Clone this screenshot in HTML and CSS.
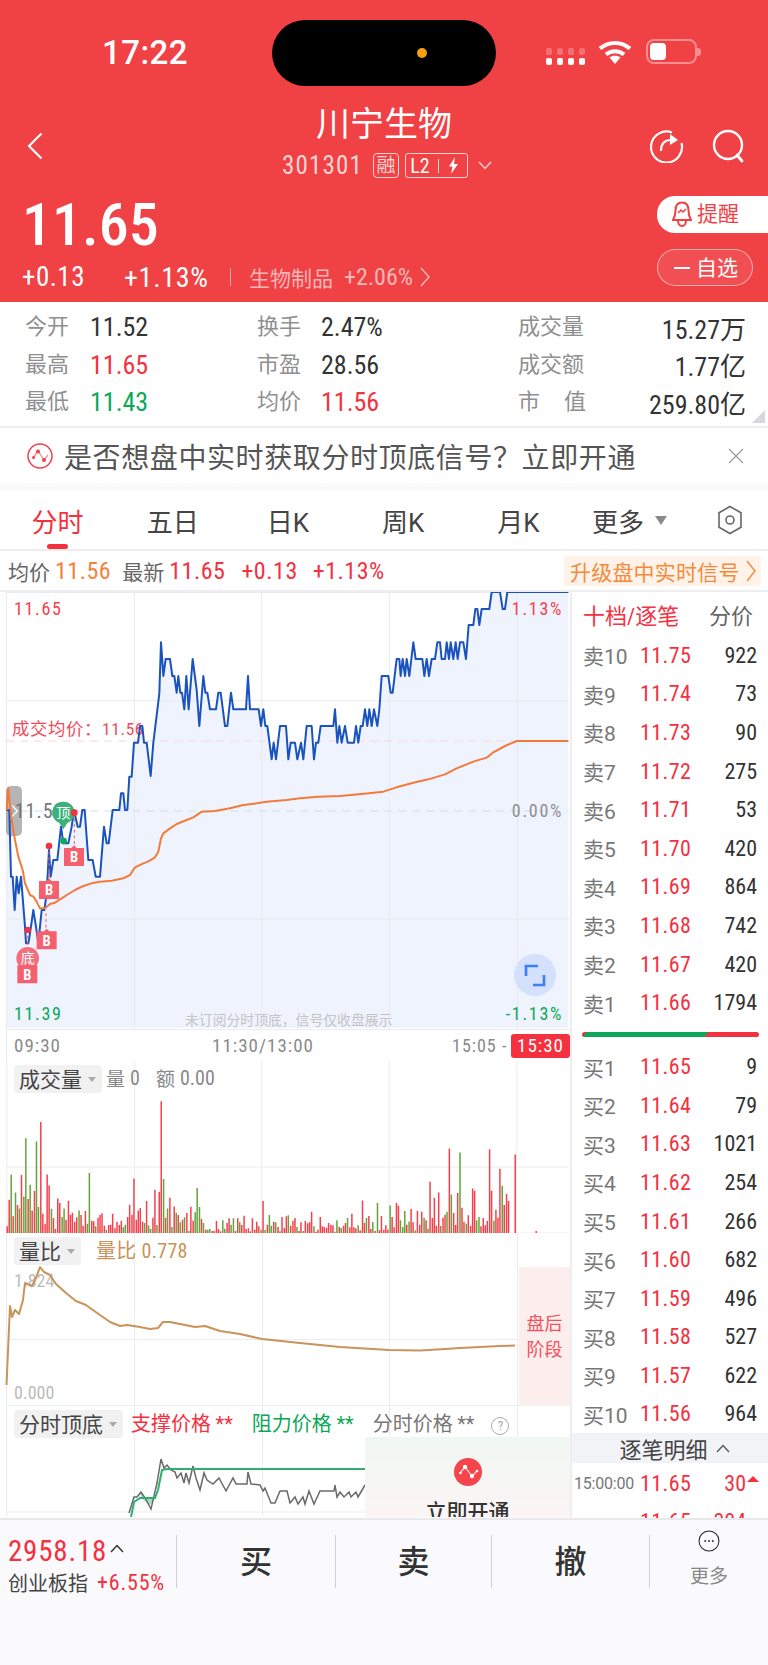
FILE: index.html
```html
<!DOCTYPE html>
<html lang="zh-CN">
<head>
<meta charset="utf-8">
<title>川宁生物 301301</title>
<link rel="stylesheet" href="styles.css">
</head>
<body>
<div class="screen">
  <header class="header">
    <div class="status">
      <div class="clock">17:22</div>
      <div class="island"><i class="island-dot"></i></div>
      <div class="status-icons">
        <svg class="sig" viewBox="0 0 39 17"><g fill="#fff" opacity=".25"><rect width="6" height="7" rx="2"/><rect x="11" width="6" height="7" rx="2"/><rect x="22" width="6" height="7" rx="2"/><rect x="33" width="6" height="7" rx="2"/></g><g fill="#fff"><rect y="10" width="6" height="7" rx="2"/><rect x="11" y="10" width="6" height="7" rx="2"/><rect x="22" y="10" width="6" height="7" rx="2"/><rect x="33" y="10" width="6" height="7" rx="2"/></g></svg>
        <svg class="wifi" viewBox="0 0 34 25"><g fill="none" stroke="#fff" stroke-width="4"><path d="M2 9.5C10.500 2 23.500 2 32 9.500"/><path d="M8 15.500C13 11 21 11 26 15.500"/></g><path d="M17 25l-5.500-6.500c3-2.500 8-2.500 11 0z" fill="#fff"/></svg>
        <div class="battery"><i class="battery-level"></i></div>
      </div>
    </div>
    <div class="nav">
      <div class="nav-side">
        <svg class="back" viewBox="0 0 16 28"><path d="M14.500 1.500L2 14l12.500 12.500" fill="none" stroke="#fff" stroke-width="2.200"/></svg>
      </div>
      <div class="nav-title">
        <h1 class="name">川宁生物</h1>
        <div class="code-row">
          <span class="code">301301</span>
          <span class="tag-rong">融</span>
          <span class="tag-l2">L2<i class="tag-rule"></i><svg class="bolt" viewBox="0 0 11 17"><path d="M7 0L1 9.500h3.500L3 17l7-10H6z" fill="#fff"/></svg></span>
          <svg class="drop" viewBox="0 0 14 9"><path d="M1 1l6 6.500L13 1" fill="none" stroke="#fbd0d0" stroke-width="1.500"/></svg>
        </div>
      </div>
      <div class="nav-side nav-actions">
        <svg class="act" viewBox="0 0 34 34"><path d="M22 3.500A15.500 15.500 0 1 0 31.500 14" fill="none" stroke="#fff" stroke-width="2.200"/><path d="M11 22c0-7 3-11 10-11" fill="none" stroke="#fff" stroke-width="2.200"/><path d="M20 5l8 6-8 5z" fill="#fff"/></svg>
        <svg class="act" viewBox="0 0 34 34"><circle cx="16" cy="16" r="14" fill="none" stroke="#fff" stroke-width="2.400"/><path d="M25 26l5 6" stroke="#fff" stroke-width="2.800" stroke-linecap="round"/></svg>
      </div>
    </div>
    <div class="quote">
      <div>
        <div class="price">11.65</div>
        <div class="quote-line">
          <span class="chg">+0.13</span>
          <span class="pct">+1.13%</span>
          <i class="quote-rule"></i>
          <span class="sector">生物制品</span>
          <span class="sector-chg">+2.06%</span>
          <svg class="sector-go" viewBox="0 0 10 20"><path d="M1 1l8 9-8 9" fill="none" stroke="#f9bcbc" stroke-width="1.400"/></svg>
        </div>
      </div>
      <div class="quote-btns">
        <div class="btn-remind">
          <svg class="bell" viewBox="0 0 20 27"><path d="M10 1.500c-4.500 0-6.500 3.500-6.500 8 0 5-1 7-2.500 9.500h18c-1.500-2.500-2.500-4.500-2.500-9.500 0-4.500-2-8-6.500-8zM6 19.500c0 3 1.500 5.500 4 5.500s4-2.500 4-5.500" fill="none" stroke="#f04145" stroke-width="2"/><path d="M6 12l3-3 2 2 3-3" fill="none" stroke="#f04145" stroke-width="1.500"/></svg>
          提醒
        </div>
        <div class="btn-watch"><i class="watch-dash"></i>自选</div>
      </div>
    </div>
  </header>

  <section class="stats">
    <span class="lab">今开</span><span class="val">11.52</span>
    <span class="lab">换手</span><span class="val">2.47%</span>
    <span class="lab">成交量</span><span class="val val-end">15.27万</span>
    <span class="lab">最高</span><span class="val up">11.65</span>
    <span class="lab">市盈</span><span class="val">28.56</span>
    <span class="lab">成交额</span><span class="val val-end">1.77亿</span>
    <span class="lab">最低</span><span class="val down">11.43</span>
    <span class="lab">均价</span><span class="val up">11.56</span>
    <span class="lab lab-spread">市 值</span><span class="val val-end">259.80亿</span>
    <i class="stats-corner"></i>
  </section>

  <section class="notice">
    <svg class="notice-icon" viewBox="0 0 26 26"><circle cx="13" cy="13" r="12" fill="#fff" stroke="#f0404c" stroke-width="1.500"/><path d="M6 15l5-7 6 9 4-5" fill="none" stroke="#e8929a" stroke-width="1.300"/><g fill="#f0404c"><circle cx="11" cy="8.500" r="2"/><circle cx="17" cy="17" r="2"/><circle cx="6.500" cy="14.500" r="1.500"/></g></svg>
    <span class="notice-text">是否想盘中实时获取分时顶底信号？立即开通</span>
    <svg class="notice-close" viewBox="0 0 16 16"><path d="M1 1l14 14M15 1L1 15" stroke="#9a9a9a" stroke-width="1.300"/></svg>
  </section>

  <nav class="tabs">
    <span class="tab tab-on">分时</span>
    <span class="tab">五日</span>
    <span class="tab">日K</span>
    <span class="tab">周K</span>
    <span class="tab">月K</span>
    <span class="tab tab-more">更多<i class="caret"></i></span>
    <span class="tab"><svg class="hex" viewBox="0 0 26 30"><path d="M13 1.500l11 6.300v14.400l-11 6.300-11-6.300V7.800z" fill="none" stroke="#666" stroke-width="1.600"/><circle cx="13" cy="15" r="4" fill="none" stroke="#666" stroke-width="1.600"/></svg></span>
  </nav>

  <div class="ticker">
    <span class="tk-lab">均价</span><span class="tk-avg">11.56</span>
    <span class="tk-lab tk-second">最新</span><span class="tk-up">11.65</span>
    <span class="tk-up tk-chg">+0.13</span>
    <span class="tk-up tk-pct">+1.13%</span>
    <span class="upgrade">升级盘中实时信号<svg class="upgrade-go" viewBox="0 0 10 22"><path d="M1 1l8 10-8 10" fill="none" stroke="#f58a3c" stroke-width="1.400"/></svg></span>
  </div>

  <div class="market">
    <div class="charts">
      <!-- intraday price chart, drawn in thirds of a pixel -->
      <svg class="chart-main" viewBox="0 0 1713 1311">
        <path class="area" d="M20 654L28 654 33 854 38 854 44 954 50 854 56 904 63 854 75 1004 78 1054 85 1054 90 1024 100 954 108 1004 115 1054 125 954 133 954 140 904 147 774 152 854 160 804 172 804 183 704 190 754 205 754 215 704 222 654 233 704 240 704 247 654 254 654 265 804 278 804 287 854 300 854 312 704 320 754 326 754 338 654 358 654 363 604 370 604 375 654 382 654 388 554 395 554 402 452 414 452 420 402 427 402 432 452 440 452 452 552 460 452 478 304 483 151 490 252 497 201 510 201 517 252 523 252 530 302 535 252 541 302 546 302 553 352 559 252 566 352 578 201 590 294 598 402 610 252 616 302 622 302 630 352 648 352 655 302 662 302 675 402 682 402 693 302 700 352 738 352 744 252 750 352 776 352 783 402 790 352 796 402 802 402 815 502 821 452 828 502 840 402 858 402 865 502 872 452 885 452 892 502 903 452 910 502 920 402 935 402 942 502 948 452 955 452 962 402 1000 402 1005 352 1012 452 1018 402 1025 452 1035 402 1043 452 1062 452 1068 402 1075 452 1082 402 1088 402 1095 352 1102 402 1108 352 1115 402 1122 352 1132 402 1138 352 1145 252 1165 252 1172 302 1178 302 1190 201 1198 201 1202 252 1208 201 1215 252 1220 201 1228 252 1240 151 1247 201 1267 201 1273 252 1280 201 1287 252 1295 201 1305 201 1312 151 1320 151 1325 201 1335 201 1340 151 1347 201 1352 151 1360 201 1367 151 1373 201 1380 151 1390 151 1398 201 1406 99 1420 99 1426 51 1432 51 1438 99 1445 51 1468 51 1475 0 1500 0 1508 51 1515 51 1522 0 1705 0V1308H20Z"/>
        <g class="grid">
          <path d="M19 0V1311M403 0V1311M785 0V1311M1168 0V1311M1552 0V1311M19 1.500H1707M19 326H1707M19 981H1707"/>
        </g>
        <path class="dash-avg" d="M19 447H1707"/>
        <path class="dash-mid" d="M19 657H1707"/>
        <rect class="handle" x="18" y="582" width="48" height="150" rx="15"/>
        <path class="handle-go" d="M36 640l16 17-16 17"/>
        <text class="lb up" x="42" y="69">11.65</text>
        <text class="lb up" x="1689" y="69" text-anchor="end">1.13%</text>
        <text class="lb-avg" x="36" y="429">成交均价：11.56</text>
        <text class="lb-mid" x="44" y="678">11.52</text>
        <text class="lb gray" x="1689" y="675" text-anchor="end">0.00%</text>
        <text class="lb down" x="42" y="1284">11.39</text>
        <text class="lb down" x="1689" y="1284" text-anchor="end">-1.13%</text>
        <text class="lb-hint" x="555" y="1299">未订阅分时顶底，信号仅收盘展示</text>
        <polyline class="line-price" points="20,654 28,654 33,854 38,854 44,954 50,854 56,904 63,854 75,1004 78,1054 85,1054 90,1024 100,954 108,1004 115,1054 125,954 133,954 140,904 147,774 152,854 160,804 172,804 183,704 190,754 205,754 215,704 222,654 233,704 240,704 247,654 254,654 265,804 278,804 287,854 300,854 312,704 320,754 326,754 338,654 358,654 363,604 370,604 375,654 382,654 388,554 395,554 402,452 414,452 420,402 427,402 432,452 440,452 452,552 460,452 478,304 483,151 490,252 497,201 510,201 517,252 523,252 530,302 535,252 541,302 546,302 553,352 559,252 566,352 578,201 590,294 598,402 610,252 616,302 622,302 630,352 648,352 655,302 662,302 675,402 682,402 693,302 700,352 738,352 744,252 750,352 776,352 783,402 790,352 796,402 802,402 815,502 821,452 828,502 840,402 858,402 865,502 872,452 885,452 892,502 903,452 910,502 920,402 935,402 942,502 948,452 955,452 962,402 1000,402 1005,352 1012,452 1018,402 1025,452 1035,402 1043,452 1062,452 1068,402 1075,452 1082,402 1088,402 1095,352 1102,402 1108,352 1115,402 1122,352 1132,402 1138,352 1145,252 1165,252 1172,302 1178,302 1190,201 1198,201 1202,252 1208,201 1215,252 1220,201 1228,252 1240,151 1247,201 1267,201 1273,252 1280,201 1287,252 1295,201 1305,201 1312,151 1320,151 1325,201 1335,201 1340,151 1347,201 1352,151 1360,201 1367,151 1373,201 1380,151 1390,151 1398,201 1406,99 1420,99 1426,51 1432,51 1438,99 1445,51 1468,51 1475,0 1500,0 1508,51 1515,51 1522,0 1705,0"/>
        <polyline class="line-avg" points="20,654 25,589 35,684 45,744 55,794 68,834 75,874 90,909 100,914 110,929 120,949 135,949 150,936 165,932 185,919 205,906 225,894 250,882 275,874 300,869 335,866 370,859 390,849 405,826 430,814 445,808 465,796 475,779 483,739 490,724 510,709 530,696 560,684 580,676 605,659 645,657 690,649 730,639 770,634 800,629 860,624 900,619 955,614 1020,612 1085,606 1150,599 1190,586 1240,572 1285,562 1335,547 1370,529 1420,509 1460,497 1480,481 1515,462 1550,447 1705,447"/>
        <!-- buy and top/bottom signals -->
        <path class="sig-dash" d="M83 1014V1100M147 762V860M138 964V1010M223 662V760"/>
        <circle class="sig-bottom" cx="83" cy="1099" r="34"/>
        <text class="sig-char" x="83" y="1112" text-anchor="middle">底</text>
        <path class="sig-top" d="M190 629a33 33 0 0 1 12 64l-12 19-12-19a33 33 0 0 1 12-64z"/>
        <text class="sig-char" x="190" y="678" text-anchor="middle">顶</text>
        <path class="sig-tag" d="M52 1120H74L82 1112 90 1120H112V1174H52Z"/>
        <text class="sig-b" x="82" y="1163" text-anchor="middle">B</text>
        <path class="sig-tag" d="M110 1018H132L140 1010 148 1018H170V1072H110Z"/>
        <text class="sig-b" x="140" y="1061" text-anchor="middle">B</text>
        <path class="sig-tag" d="M117 867H139L147 859 155 867H177V921H117Z"/>
        <text class="sig-b" x="147" y="910" text-anchor="middle">B</text>
        <path class="sig-tag" d="M192 768H214L222 760 230 768H252V822H192Z"/>
        <text class="sig-b" x="222" y="811" text-anchor="middle">B</text>
        <circle class="dot-up" cx="83" cy="1014" r="10"/>
        <circle class="dot-up" cx="147" cy="762" r="10"/>
        <circle class="dot-up" cx="223" cy="662" r="10"/>
        <circle class="dot-down" cx="191" cy="747" r="10"/>
        <circle class="expand" cx="1605" cy="1149" r="63"/>
        <path class="expand-mark" d="M1578 1152V1122H1614M1632 1149V1179H1599"/>
      </svg>

      <div class="axis">
        <span class="axis-a">09:30</span>
        <span class="axis-b">11:30/13:00</span>
        <span class="axis-c">15:05 -</span>
        <span class="axis-now">15:30</span>
      </div>

      <div class="pane pane-vol">
        <svg class="pane-svg" viewBox="0 3 1713 517">
          <path class="grid-line" d="M19 0V520M403 0V520M785 0V520M1168 0V520M1552 0V520M19 322H1707M19 520H1707"/>
          <path class="bars-up" d="M20 500V520M26 420V520M38 470V520M51 436V520M63 346V520M83 418V520M95 452V520M102 394V520M121 186V520M127 462V520M134 492V520M140 344V520M146 377V520M159 475V520M165 508V520M172 416V520M178 430V520M197 480V520M204 423V520M210 465V520M216 459V520M223 486V520M229 473V520M242 466V520M248 498V520M255 454V520M274 483V520M280 485V520M293 474V520M299 466V520M305 461V520M312 498V520M325 496V520M331 495V520M337 462V520M344 506V520M350 486V520M357 496V520M363 483V520M382 472V520M388 435V520M395 465V520M401 356V520M408 480V520M414 452V520M420 445V520M427 486V520M439 424V520M458 474V520M464 390V520M477 397V520M483 124V520M496 474V520M509 414V520M522 440V520M534 466V520M547 480V520M560 460V520M572 441V520M579 483V520M604 477V520M617 510V520M636 514V520M642 514V520M649 484V520M655 508V520M661 515V520M681 490V520M687 476V520M706 514V520M713 476V520M725 496V520M732 468V520M738 508V520M745 506V520M757 476V520M764 510V520M770 486V520M776 500V520M789 424V520M802 495V520M821 486V520M834 502V520M846 472V520M853 505V520M859 470V520M872 498V520M879 483V520M885 475V520M897 514V520M903 488V520M916 484V520M923 491V520M929 488V520M935 456V520M948 516V520M954 510V520M961 472V520M967 500V520M973 502V520M980 504V520M986 490V520M993 495V520M999 497V520M1018 502V520M1031 498V520M1037 490V520M1050 503V520M1056 462V520M1062 503V520M1068 506V520M1081 512V520M1088 422V520M1094 490V520M1107 469V520M1113 508V520M1126 514V520M1139 512V520M1145 469V520M1152 510V520M1158 497V520M1164 510V520M1177 472V520M1183 503V520M1190 430V520M1196 438V520M1221 495V520M1234 448V520M1240 488V520M1253 453V520M1260 495V520M1266 456V520M1279 482V520M1291 366V520M1298 475V520M1304 414V520M1310 498V520M1317 398V520M1330 474V520M1336 465V520M1349 266V520M1362 460V520M1368 496V520M1374 400V520M1387 444V520M1393 486V520M1406 467V520M1413 498V520M1419 386V520M1425 393V520M1444 500V520M1451 475V520M1457 497V520M1463 484V520M1470 268V520M1476 393V520M1489 450V520M1495 474V520M1501 327V520M1514 436V520M1521 403V520M1527 424V520M1547 284V520M1610 514V520"/>
          <path class="bars-down" d="M32 345V520M45 398V520M57 446V520M70 410V520M76 235V520M89 375V520M108 245V520M114 442V520M153 447V520M185 472V520M191 446V520M236 452V520M261 492V520M267 340V520M286 500V520M318 510V520M369 503V520M375 495V520M433 490V520M445 497V520M451 508V520M470 496V520M490 358V520M502 446V520M515 502V520M528 459V520M540 488V520M553 473V520M566 514V520M585 458V520M591 385V520M598 442V520M610 490V520M623 510V520M629 508V520M668 482V520M674 507V520M693 495V520M700 476V520M719 488V520M751 515V520M783 510V520M795 510V520M808 466V520M814 498V520M827 488V520M840 515V520M865 467V520M891 502V520M910 514V520M942 500V520M1005 516V520M1011 482V520M1024 505V520M1043 475V520M1075 497V520M1100 475V520M1119 487V520M1133 430V520M1171 437V520M1202 482V520M1209 502V520M1215 454V520M1228 486V520M1247 512V520M1273 474V520M1285 507V520M1323 498V520M1342 456V520M1355 404V520M1381 278V520M1400 492V520M1431 482V520M1438 472V520M1483 483V520M1508 378V520"/>
        </svg>
        <div class="pane-tools">
          <span class="chip">成交量<i class="chip-caret"></i></span>
          <span class="vol-lab">量</span><span class="vol-num">0</span>
          <span class="vol-lab vol-gap">额</span><span class="vol-num">0.00</span>
        </div>
      </div>

      <div class="pane pane-ratio">
        <svg class="pane-svg" viewBox="0 1233 571 173">
          <path class="grid-thin" d="M6.500 1233V1406M134.500 1233V1406M262.500 1233V1406M389.500 1233V1406M517.500 1233V1406M6 1339.500H570M6 1405.500H570"/>
          <text class="lb-small" x="14" y="1287">1.824</text>
          <text class="lb-small" x="14" y="1399">0.000</text>
          <polyline class="line-ratio" points="6.500,1385 10,1306 12,1317 15,1310 19,1314 23,1300 25,1283 32,1286 36,1278 40,1267 44,1272 50,1275 56,1284 66,1293 76,1301 86,1305 90,1308 100,1315 110,1322 120,1326 127,1325 140,1327 150,1329 158,1328 163,1322 170,1322 180,1324 195,1327 205,1326 220,1331 240,1334 262,1339 300,1343 340,1347 389,1350 420,1350.500 445,1349 460,1348 480,1347 500,1346 515,1345.500"/>
        </svg>
        <div class="pane-tools">
          <span class="chip">量比<i class="chip-caret"></i></span>
          <span class="ratio-val">量比 0.778</span>
        </div>
        <div class="after-hours">盘后<br>阶段</div>
      </div>

      <div class="pane pane-signal">
        <svg class="pane-svg" viewBox="0 1406 571 111">
          <path class="grid-thin" d="M6.500 1406V1517M134.500 1406V1517M262.500 1406V1517M389.500 1406V1517M517.500 1406V1517M6 1512H570"/>
          <path class="band" d="M140 1492L145 1498 155 1498 150 1505 141 1498Z"/>
          <polyline class="line-gray" points="129,1513 134,1497 137,1497 141,1492 145,1498 151,1509 157,1483 161,1459 164,1468 167,1465 171,1470 175,1472 177,1478 181,1473 184,1483 186,1473 189,1483 193,1466 196,1478 200,1490 204,1473 207,1480 213,1484 219,1478 226,1491 233,1478 236,1484 247,1484 248,1472 251,1484 260,1485 263,1491 265,1488 271,1503 275,1503 280,1491 287,1491 290,1503 295,1497 298,1504 303,1497 305,1504 309,1491 314,1504 320,1491 334,1491 335,1485 337,1497 340,1492 344,1497 349,1492 351,1497 356,1492 358,1497 365,1485"/>
          <polyline class="line-green" points="131,1517 134,1502 140,1498 155,1498 158,1490 162,1470 167,1469 365,1469"/>
        </svg>
        <div class="pane-tools signal-tools">
          <span class="chip">分时顶底<i class="chip-caret"></i></span>
          <span class="sg sg-up">支撑价格 **</span>
          <span class="sg sg-down">阻力价格 **</span>
          <span class="sg sg-gray">分时价格 **</span>
          <span class="sg-help">?</span>
        </div>
        <div class="unlock">
          <svg class="unlock-icon" viewBox="0 0 28 28"><circle cx="14" cy="14" r="14" fill="#f4454c"/><path d="M6 15l5-6 7 9 5-5" fill="none" stroke="#fff" stroke-width="1.200" opacity=".8"/><g fill="#fff"><circle cx="11" cy="9" r="2.200"/><circle cx="18" cy="18" r="2.200"/><circle cx="6.500" cy="15" r="1.300"/><circle cx="23" cy="13" r="1.300"/></g></svg>
          <span class="unlock-text">立即开通</span>
        </div>
      </div>
    </div>

    <aside class="book">
      <div class="book-head"><span class="book-title">十档/逐笔</span><span class="book-alt">分价</span></div>
      <div class="row"><span class="r-lab">卖10</span><span class="r-price">11.75</span><span class="r-qty">922</span></div>
      <div class="row"><span class="r-lab">卖9</span><span class="r-price">11.74</span><span class="r-qty">73</span></div>
      <div class="row"><span class="r-lab">卖8</span><span class="r-price">11.73</span><span class="r-qty">90</span></div>
      <div class="row"><span class="r-lab">卖7</span><span class="r-price">11.72</span><span class="r-qty">275</span></div>
      <div class="row"><span class="r-lab">卖6</span><span class="r-price">11.71</span><span class="r-qty">53</span></div>
      <div class="row"><span class="r-lab">卖5</span><span class="r-price">11.70</span><span class="r-qty">420</span></div>
      <div class="row"><span class="r-lab">卖4</span><span class="r-price">11.69</span><span class="r-qty">864</span></div>
      <div class="row"><span class="r-lab">卖3</span><span class="r-price">11.68</span><span class="r-qty">742</span></div>
      <div class="row"><span class="r-lab">卖2</span><span class="r-price">11.67</span><span class="r-qty">420</span></div>
      <div class="row"><span class="r-lab">卖1</span><span class="r-price">11.66</span><span class="r-qty">1794</span></div>
      <div class="balance"><div class="balance-bar"><i class="balance-buy"></i></div></div>
      <div class="row"><span class="r-lab">买1</span><span class="r-price">11.65</span><span class="r-qty">9</span></div>
      <div class="row"><span class="r-lab">买2</span><span class="r-price">11.64</span><span class="r-qty">79</span></div>
      <div class="row"><span class="r-lab">买3</span><span class="r-price">11.63</span><span class="r-qty">1021</span></div>
      <div class="row"><span class="r-lab">买4</span><span class="r-price">11.62</span><span class="r-qty">254</span></div>
      <div class="row"><span class="r-lab">买5</span><span class="r-price">11.61</span><span class="r-qty">266</span></div>
      <div class="row"><span class="r-lab">买6</span><span class="r-price">11.60</span><span class="r-qty">682</span></div>
      <div class="row"><span class="r-lab">买7</span><span class="r-price">11.59</span><span class="r-qty">496</span></div>
      <div class="row"><span class="r-lab">买8</span><span class="r-price">11.58</span><span class="r-qty">527</span></div>
      <div class="row"><span class="r-lab">买9</span><span class="r-price">11.57</span><span class="r-qty">622</span></div>
      <div class="row"><span class="r-lab">买10</span><span class="r-price">11.56</span><span class="r-qty">964</span></div>
      <div class="ticks-head">逐笔明细<svg class="ticks-fold" viewBox="0 0 14 9"><path d="M1 8l6-6.500L13 8" fill="none" stroke="#555" stroke-width="1.300"/></svg></div>
      <div class="tick"><span class="t-time">15:00:00</span><span class="r-price">11.65</span><span class="t-qty">30<i class="t-arrow"></i></span></div>
      <div class="tick"><span class="t-time"></span><span class="r-price">11.65</span><span class="t-qty">304<i class="t-arrow t-arrow-off"></i></span></div>
    </aside>
  </div>

  <footer class="dock">
    <div class="dock-index">
      <div class="idx-top"><span class="idx-val">2958.18</span><svg class="idx-go" viewBox="0 0 14 9"><path d="M1 8l6-6.500L13 8" fill="none" stroke="#333" stroke-width="1.500"/></svg></div>
      <div class="idx-bottom"><span class="idx-name">创业板指</span><span class="idx-chg">+6.55%</span></div>
    </div>
    <div class="dock-btn">买</div>
    <div class="dock-btn">卖</div>
    <div class="dock-btn">撤</div>
    <div class="dock-more">
      <svg class="more-icon" viewBox="0 0 32 32"><circle cx="16" cy="16" r="14.500" fill="none" stroke="#222" stroke-width="1.500"/><g fill="#222"><circle cx="10.500" cy="16" r="1.300"/><circle cx="16" cy="16" r="1.300"/><circle cx="21.500" cy="16" r="1.300"/></g></svg>
      <span class="more-text">更多</span>
    </div>
  </footer>
</div>
</body>
</html>
```
FILE: styles.css
```css
* { box-sizing: border-box; }
html, body { margin: 0; padding: 0; }
body {
  width: 768px;
  height: 1665px;
  overflow: hidden;
  background: #fafafc;
  color: #333;
  font-family: Roboto, "Noto Sans CJK SC", sans-serif;
  font-stretch: 85%;
}
i { display: block; font-style: normal; }
svg { display: block; }
.screen { width: 768px; height: 1665px; display: flex; flex-direction: column; }

/* red quote header */
.header { height: 302px; background: #f04145; color: #fff; flex: none; }
.status { display: grid; grid-template-columns: 272px 224px 272px; padding-top: 20px; }
.clock { font-size: 33px; font-weight: 500; font-stretch: 100%; text-align: center; line-height: 66px; margin-left: 18px; letter-spacing: .5px; }
.island { height: 66px; border-radius: 33px; background: #000; display: flex; align-items: center; justify-content: flex-end; padding-right: 69px; }
.island-dot { width: 10px; height: 10px; border-radius: 50%; background: #f5a00f; }
.status-icons { display: flex; align-items: flex-start; padding: 19px 0 0 50px; }
.sig { width: 39px; height: 17px; margin-top: 9px; }
.wifi { width: 34px; height: 25px; margin-left: 13px; }
.battery { width: 51px; height: 25px; margin-left: 14px; border: 2px solid rgba(255,255,255,.4); border-radius: 8px; padding: 2px; position: relative; }
.battery::after { content: ""; position: absolute; right: -6px; top: 7px; width: 4px; height: 8px; background: rgba(255,255,255,.4); border-radius: 0 3px 3px 0; }
.battery-level { width: 16px; height: 17px; background: #fff; border-radius: 4px; }

.nav { display: flex; align-items: center; padding-top: 19px; }
.nav-side { width: 120px; flex: none; display: flex; padding-left: 27px; margin-top: 8px; }
.nav-actions { justify-content: flex-end; padding: 0 22px 0 0; gap: 28px; }
.back { width: 16px; height: 28px; }
.act { width: 34px; height: 34px; }
.nav-title { flex: 1; display: flex; flex-direction: column; align-items: center; }
.name { margin: 0; font-size: 34px; font-weight: 400; line-height: 38px; }
.code-row { display: flex; align-items: center; gap: 10px; margin: 10px 0 0 6px; height: 25px; color: #fbd5d5; }
.code { font-size: 25px; letter-spacing: 1.200px; }
.tag-rong { width: 26px; height: 25px; border: 1px solid #fbd5d5; border-radius: 4px; font-size: 19px; line-height: 23px; text-align: center; }
.tag-l2 { width: 63px; height: 25px; margin-left: -4px; border: 1px solid #fbd5d5; border-radius: 3px; font-size: 20px; display: flex; align-items: center; padding-left: 4px; color: #fff; }
.tag-rule { width: 1px; height: 14px; background: #fbd5d5; margin: 0 9px 0 8px; }
.bolt { width: 11px; height: 17px; }
.drop { width: 14px; height: 9px; }

.quote { display: flex; justify-content: space-between; padding: 17px 0 0 22px; }
.price { font-size: 60px; line-height: 60px; font-weight: 500; }
.quote-line { display: flex; align-items: center; height: 26px; margin-top: 9px; font-size: 27px; white-space: nowrap; }
.chg { width: 102px; letter-spacing: .5px; }
.pct { width: 106px; font-size: 28px; letter-spacing: .7px; }
.quote-rule { width: 1px; height: 18px; background: #f9a0a0; }
.sector { margin-left: 18px; font-size: 21px; color: #f9b7b7; }
.sector-chg { margin-left: 11px; font-size: 24px; color: #f9b7b7; }
.sector-go { width: 10px; height: 20px; margin-left: 7px; }
.quote-btns { width: 111px; padding-top: 1px; display: flex; flex-direction: column; gap: 16px; }
.btn-remind { height: 37px; background: #fff; border-radius: 18px 0 0 18px; color: #f04145; font-size: 21px; line-height: 28px; display: flex; align-items: center; padding: 0 0 2px 15px; gap: 5px; }
.bell { width: 20px; height: 27px; margin-top: 2px; }
.btn-watch { width: 96px; height: 37px; border: 1px solid rgba(255,255,255,.55); background: rgba(255,255,255,.08); border-radius: 19px; font-size: 21px; display: flex; align-items: center; padding: 0 0 3px 16px; gap: 6px; }
.watch-dash { width: 16px; height: 2px; margin-top: 3px; background: #fff; }

/* key figures */
.stats { flex: none; position: relative; height: 126px; background: #fff; display: grid; grid-template-columns: 65px 167px 64px 197px 68px 160px; grid-auto-rows: 37.500px; padding: 6px 22px 0 25px; border-bottom: 2px solid #eeeef0; align-items: center; }
.lab { font-size: 22px; color: #8f8f8f; white-space: nowrap; padding-bottom: 5px; }
.lab-spread { text-align-last: justify; }
.val { font-size: 26px; color: #333; white-space: nowrap; padding-top: 1px; }
.val-end { text-align: right; }
.up { color: #f5303f; }
.down { color: #0aa858; }
.stats-corner { position: absolute; right: 3px; bottom: 3px; width: 0; height: 0; border-style: solid; border-width: 0 0 13px 13px; border-color: transparent transparent #d8d8dc transparent; }

/* signal promotion strip */
.notice { flex: none; height: 55px; background: #fff; display: flex; align-items: center; padding-left: 27px; }
.notice-icon { width: 26px; height: 26px; }
.notice-text { margin-left: 11px; font-size: 28px; letter-spacing: .6px; color: #555; flex: 1; white-space: nowrap; }
.notice-close { width: 16px; height: 16px; margin-right: 24px; }

.tabs { flex: none; height: 60px; margin-top: 8px; background: #fff; border-bottom: 2px solid #eeeef0; display: grid; grid-template-columns: repeat(6, 115.200px) 1fr; align-items: center; }
.tab { position: relative; font-size: 26px; font-stretch: 100%; color: #444; display: flex; justify-content: center; align-items: center; height: 58px; }
.tab-on { color: #f5303f; }
.tab-more { padding-right: 8px; }
.tab-on::after { content: ""; position: absolute; left: 47px; bottom: 0; width: 21px; height: 5px; border-radius: 3px; background: #f5303f; }
.caret { width: 0; height: 0; margin-left: 11px; border: 6px solid transparent; border-top: 9px solid #8a8a8a; border-bottom: 0; }
.hex { width: 26px; height: 30px; }

.ticker { flex: none; height: 41px; background: #fff; display: flex; align-items: center; padding-left: 8px; font-size: 24px; letter-spacing: .5px; border-bottom: 2px solid #eeeef0; white-space: nowrap; }
.tk-lab { font-size: 21px; letter-spacing: 0; color: #666; }
.tk-avg { margin-left: 5px; color: #f5823c; }
.tk-second { margin-left: 11px; }
.tk-up { margin-left: 5px; color: #f5303f; }
.tk-chg { margin-left: 16px; }
.tk-pct { margin-left: 15px; }
.upgrade { margin-left: auto; margin-right: 7px; width: 197px; height: 30px; background: #fff2e8; border-radius: 4px; color: #f58a3c; font-size: 21px; letter-spacing: .2px; display: flex; align-items: center; padding-left: 6px; white-space: nowrap; }
.upgrade-go { width: 10px; height: 22px; margin-left: 6px; }

/* chart column and order book */
.market { flex: none; height: 926px; overflow: hidden; background: #fff; display: flex; }
.charts { width: 571px; flex: none; }
.chart-main { width: 571px; height: 437px; }
.area { fill: #eef3fe; }
.grid path { fill: none; stroke: #e9eaee; stroke-width: 3; }
.dash-avg { stroke: #f7d6dc; stroke-width: 3; stroke-dasharray: 24 18; }
.dash-mid { stroke: #d5dde8; stroke-width: 3; stroke-dasharray: 24 18; }
.handle { fill: rgba(120,120,120,.55); }
.handle-go { fill: none; stroke: #fff; stroke-width: 4; }
.lb { font-size: 54px; letter-spacing: 5px; }
.lb-mid { font-size: 60px; letter-spacing: 3px; fill: #777; }
svg .up { fill: #f5404c; }
svg .down { fill: #0aa858; }
svg .gray { fill: #8e8e8e; }
.lb-avg { font-size: 52px; fill: #f04a58; letter-spacing: 2px; }
.lb-hint { font-size: 41.500px; fill: #c4c4c4; }
.line-price { fill: none; stroke: #1a53bd; stroke-width: 6; stroke-linejoin: round; }
.line-avg { fill: none; stroke: #f47a3c; stroke-width: 6; stroke-linejoin: round; }
.sig-dash { fill: none; stroke: #f25a6b; stroke-width: 3; stroke-dasharray: 9 8; }
.sig-bottom { fill: #f2707e; }
.sig-top { fill: #3cb27a; }
.sig-char { font-size: 42px; fill: #fff; }
.sig-tag { fill: #f4606e; }
.sig-b { font-size: 44px; font-weight: 700; fill: #fff; }
.dot-up { fill: #f5303f; }
.dot-down { fill: #0aa858; }
.expand { fill: #d4e1fd; }
.expand-mark { fill: none; stroke: #3f7ff5; stroke-width: 8; }

.axis { height: 32px; margin-left: 6px; border-left: 1px solid #e9eaee; border-top: 1px solid #e9eaee; display: flex; align-items: center; padding-left: 7px; font-size: 19px; color: #8a8a8a; letter-spacing: 1px; white-space: nowrap; }
.axis-a { width: 198px; }
.axis-b { width: 240px; }
.axis-c { width: 59px; font-size: 18px; }
.axis-now { width: 59px; height: 24px; border-radius: 3px; background: #f5303f; color: #fff; text-align: center; line-height: 24px; }

.pane { position: relative; }
.pane-vol { height: 172px; }
.pane-ratio { height: 173px; }
.pane-signal { height: 111px; overflow: hidden; }
.pane-svg { width: 571px; height: 100%; }
.grid-line { fill: none; stroke: #ebecef; stroke-width: 3; }
.grid-thin { fill: none; stroke: #ebecef; stroke-width: 1; }
.bars-up { fill: none; stroke: #f4404c; stroke-width: 4.500; }
.bars-down { fill: none; stroke: #62a43a; stroke-width: 4.500; }
.pane-tools { position: absolute; left: 14px; top: 4px; display: flex; align-items: center; height: 28px; white-space: nowrap; }
.chip { height: 28px; padding: 0 6px 3px 5px; border-radius: 4px; background: #f1f1f2; color: #444; font-size: 21px; display: flex; align-items: center; gap: 6px; }
.chip-caret { width: 0; height: 0; margin-top: 3px; border: 4px solid transparent; border-top: 5px solid #aaa; border-bottom: 0; }
.vol-lab { margin-left: 4px; padding-bottom: 3px; font-size: 19px; color: #888; }
.vol-num { margin-left: 5px; padding-bottom: 3px; font-size: 20px; color: #888; }
.vol-gap { margin-left: 16px; }
.ratio-val { margin-left: 15px; padding-bottom: 3px; font-size: 20px; letter-spacing: .3px; color: #c9935a; }
.lb-small { font-size: 18px; fill: #bbb; }
.line-ratio { fill: none; stroke: #c9935a; stroke-width: 2; stroke-linejoin: round; }
.after-hours { position: absolute; left: 519px; top: 34px; width: 51px; height: 139px; background: #fdeeee; color: #f5505c; font-size: 18px; line-height: 26px; display: flex; align-items: center; justify-content: center; text-align: center; }
.line-gray { fill: none; stroke: #6a6a6a; stroke-width: 1.500; }
.line-green { fill: none; stroke: #2db06f; stroke-width: 2; }
.band { fill: #a5dfc2; }
.sg { font-size: 20px; margin-left: 19px; padding-bottom: 3px; }
.signal-tools .chip { margin-right: -11px; }
.sg-up { color: #f5303f; }
.sg-down { color: #0aa858; }
.sg-gray { color: #777; }
.sg-help { width: 18px; height: 18px; margin-left: 17px; margin-top: 4px; border: 1.500px solid #aaa; border-radius: 50%; color: #aaa; font-size: 13px; line-height: 15px; text-align: center; }
.unlock { position: absolute; left: 365px; top: 31px; width: 205px; height: 96px; background: linear-gradient(#f0f7f3, #fdf5f5); display: flex; flex-direction: column; align-items: center; padding-top: 21px; }
.unlock-icon { width: 28px; height: 28px; }
.unlock-text { margin-top: 12px; font-size: 21px; font-weight: 500; line-height: 28px; color: #333; }

.book { flex: 1; border-left: 2px solid #eeeef0; margin-left: -1px; }
.book-head { height: 44px; display: flex; align-items: center; justify-content: space-between; padding: 0 16px 0 11px; font-size: 22px; }
.book-title { color: #f5303f; }
.book-alt { color: #666; }
.row { height: 38.600px; display: flex; align-items: center; padding: 0 12px 0 11px; }
.r-lab { width: 57px; font-size: 21px; font-stretch: 100%; color: #777; white-space: nowrap; }
.r-price { width: 62px; font-size: 22px; color: #f5303f; letter-spacing: .4px; }
.r-qty { flex: 1; text-align: right; font-size: 22px; color: #333; }
.balance { height: 25.400px; display: flex; align-items: center; padding: 0 10px; }
.balance-bar { width: 177px; height: 5px; border-radius: 3px; background: #f5303f; overflow: hidden; }
.balance-buy { width: 122px; height: 5px; background: #0aa858; transform: skewX(-45deg); transform-origin: 0 100%; }
.ticks-head { height: 30px; background: #f2f3f7; display: flex; align-items: center; justify-content: center; gap: 8px; padding-left: 8px; font-size: 22px; color: #444; }
.ticks-fold { width: 14px; height: 9px; }
.tick { height: 38px; display: flex; align-items: center; padding: 0 10px 0 2px; }
.ticks-head + .tick { margin-top: 1px; }
.t-time { width: 66px; font-size: 16px; font-stretch: 100%; letter-spacing: -.2px; color: #777; white-space: nowrap; }
.t-qty { flex: 1; display: flex; justify-content: flex-end; align-items: center; font-size: 22px; color: #f5303f; }
.t-arrow { width: 0; height: 0; margin: -8px 0 0 1px; border: 6px solid transparent; border-bottom: 6px solid #f5303f; border-top: 0; }
.t-arrow-off { visibility: hidden; }

/* bottom trading dock */
.dock { flex: 1; background: #fafafc; border-top: 2px solid #e8e8ec; display: flex; align-items: flex-start; padding-top: 15px; }
.dock-index { width: 176px; height: 53px; padding-left: 8px; position: relative; }
.idx-top { display: flex; align-items: center; height: 28px; margin-top: 2px; }
.idx-val { font-size: 29px; letter-spacing: .8px; color: #f5303f; }
.idx-go { width: 14px; height: 9px; margin: -6px 0 0 3px; }
.idx-bottom { display: flex; align-items: center; margin-top: 5px; height: 24px; white-space: nowrap; }
.idx-name { font-size: 20px; color: #444; }
.idx-chg { margin-left: 9px; font-size: 22px; letter-spacing: .8px; color: #f5303f; }
.dock-btn { height: 53px; border-left: 1px solid #d0d0d4; display: flex; align-items: center; justify-content: center; padding-bottom: 6px; font-size: 32px; font-weight: 500; color: #333; }
.dock-btn:nth-child(2) { width: 159px; }
.dock-btn:nth-child(3) { width: 156px; }
.dock-btn:nth-child(4) { width: 158px; }
.dock-more { height: 53px; flex: 1; border-left: 1px solid #d0d0d4; display: flex; flex-direction: column; align-items: center; }
.more-icon { width: 32px; height: 32px; margin-top: -5px; }
.more-text { margin-top: 9px; font-size: 19px; color: #888; white-space: nowrap; }
```
